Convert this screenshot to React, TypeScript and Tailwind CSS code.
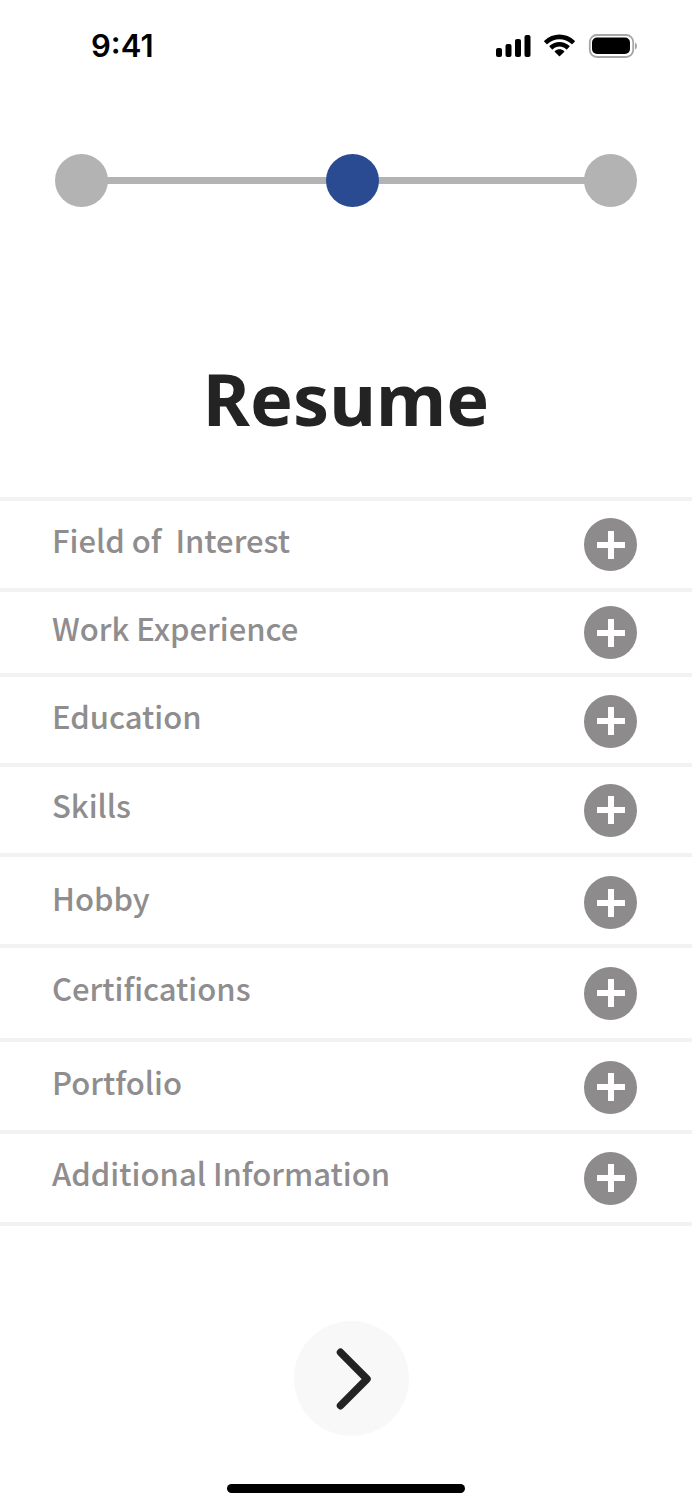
const sections = [
  { label: "Field of  Interest", row: "h-[91px]" },
  { label: "Work Experience", row: "h-[85px]" },
  { label: "Education", row: "h-[90px] pt-0.5" },
  { label: "Skills", row: "h-[90px]" },
  { label: "Hobby", row: "h-[91px] pt-1" },
  { label: "Certifications", row: "h-[94px]" },
  { label: "Portfolio", row: "h-[92px] pt-0.5" },
  { label: "Additional Information", row: "h-[92px]" },
];

function StatusIcons() {
  return (
    <svg width="142" height="26" viewBox="0 0 142 26" fill="none" aria-hidden="true">
      <g fill="#000">
        <rect x="0" y="15" width="6" height="9" rx="2" />
        <rect x="9.5" y="11" width="6" height="13" rx="2" />
        <rect x="19" y="6" width="6" height="18" rx="2" />
        <rect x="28.5" y="2" width="6" height="22" rx="2" />
        <path d="M63.5 6.2c4.5 0 8.800 1.700 12 4.800.25.24.65.24.9 0l2.300-2.350a.7.7 0 0 0 0-1c-8.500-8.150-21.900-8.150-30.400 0a.7.7 0 0 0 0 1l2.300 2.350c.25.24.65.24.9 0 3.200-3.100 7.500-4.800 12-4.800z" />
        <path d="M63.500 13.600c2.500 0 4.900.95 6.700 2.600.25.24.65.24.9 0l2.300-2.350a.7.7 0 0 0 0-1c-5.600-5.300-14.200-5.300-19.800 0a.7.7 0 0 0 0 1l2.300 2.350c.25.24.65.24.9 0 1.800-1.650 4.200-2.600 6.700-2.600z" />
        <path d="M68.100 18.900a.7.700 0 0 0 0-1c-2.600-2.200-6.600-2.200-9.200 0a.7.7 0 0 0 0 1l4.100 4.100c.27.28.73.28 1 0z" />
        <rect x="96" y="4.500" width="38" height="16.500" rx="5" />
      </g>
      <rect x="93.800" y="2" width="43.400" height="22" rx="7" stroke="#a6a6a6" strokeWidth="1.800" />
      <path d="M139 9.500c2.700 1.100 2.700 6 0 7.100z" fill="#a6a6a6" />
    </svg>
  );
}

function Step({ active = false }: { active?: boolean }) {
  return (
    <li
      aria-current={active ? "step" : undefined}
      className={`relative z-10 size-[53px] shrink-0 rounded-full ${active ? "bg-[#2a4b91]" : "bg-[#b3b3b3]"}`}
    />
  );
}

export default function App() {
  return (
    <div className="flex min-h-screen flex-col bg-white font-['Noto_Sans_CJK_SC','Noto_Sans',sans-serif] text-[#232323]">
      <header className="flex items-center justify-between pt-7 pr-[54px] pl-[91px]">
        <time className="font-['Inter',sans-serif] text-[31px] leading-9 font-semibold text-black">9:41</time>
        <StatusIcons />
      </header>

      <ol aria-label="Progress" className="mt-[90px] flex items-center px-[55px]">
        <Step />
        <li aria-hidden="true" className="-mx-px h-[7px] grow-[218] bg-[#b3b3b3]" />
        <Step active />
        <li aria-hidden="true" className="-mx-px h-[7px] grow-[206] bg-[#b3b3b3]" />
        <Step />
      </ol>

      <main className="flex flex-col">
        <h1 className="mt-[141px] text-center font-['Noto_Sans',sans-serif] text-[72px] leading-[100px] font-bold">
          Resume
        </h1>

        <ul className="mt-[49px] border-t-4 border-[#f2f2f2]">
          {sections.map(({ label, row }) => (
            <li
              key={label}
              className={`flex items-center justify-between border-b-4 border-[#f2f2f2] pr-[55px] pl-[52px] ${row}`}
            >
              <span className="pb-2.5 text-[31px] leading-10 font-medium whitespace-pre text-[#8f8d8e]">{label}</span>
              <button
                type="button"
                aria-label={`Add ${label}`}
                className="flex size-[53px] shrink-0 items-center justify-center rounded-full bg-[#8d8b8c]"
              >
                <svg width="28" height="28" viewBox="0 0 28 28" aria-hidden="true">
                  <path d="M14 0v28M0 14h28" stroke="#fff" strokeWidth="6" />
                </svg>
              </button>
            </li>
          ))}
        </ul>

        <div className="flex justify-center pt-[95px] pl-[10px]">
          <button
            type="button"
            aria-label="Next"
            className="flex size-[115px] items-center justify-center rounded-full bg-[#f8f8f8]"
          >
            <svg width="40" height="62" viewBox="0 0 40 62" fill="none" aria-hidden="true">
              <path d="M9.500 4.300l26.500 26.700L9.500 57.700" stroke="#232323" strokeWidth="7.500" strokeLinecap="round" strokeLinejoin="round" />
            </svg>
          </button>
        </div>
      </main>

      <div className="mt-auto mb-[11px] h-[9px] w-[238px] self-center rounded-full bg-black" />
    </div>
  );
}
